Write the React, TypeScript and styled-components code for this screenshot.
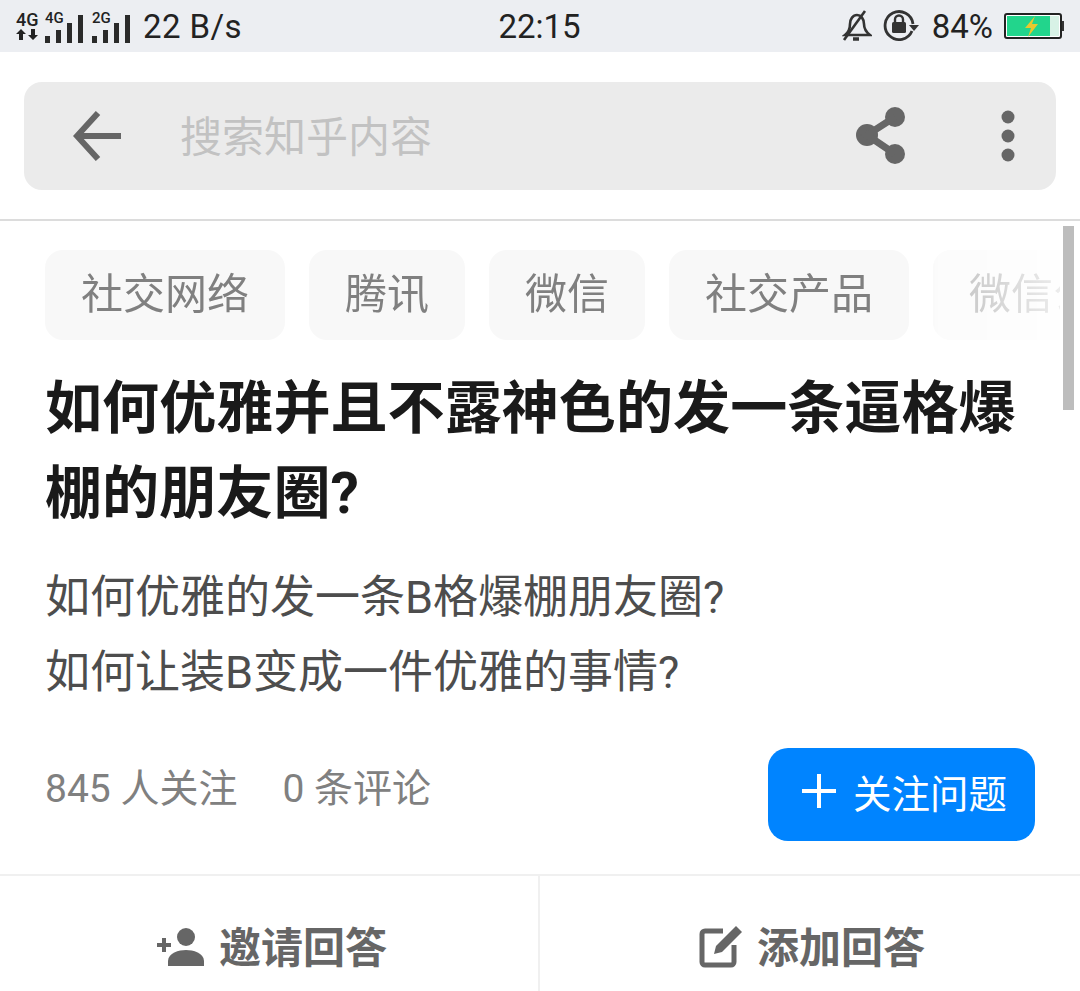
import React from "react";
import styled, { createGlobalStyle } from "styled-components";

const Global = createGlobalStyle`
    html, body {
        margin: 0;
        padding: 0;
        background: #fff;
    }
    * {
        box-sizing: border-box;
    }
`

const FONT = `Roboto, "Noto Sans CJK SC", sans-serif`

const Screen = styled.div`
    position: relative;
    width: 1080px;
    height: 991px;
    overflow: hidden;
    background: #fff;
    font-family: ${FONT};
`

const StatusBar = styled.div`
    display: grid;
    grid-template-columns: 1fr auto 1fr;
    align-items: center;
    height: 52px;
    padding: 0 16px;
    background: #eceef2;
    color: #222;
    font-size: 33px;
`

const StatusLeft = styled.div`
    display: flex;
    align-items: center;
`

const StatusRight = styled.div`
    display: flex;
    align-items: center;
    justify-content: flex-end;
    gap: 11px;
`

const Clock = styled.div`
    margin-right: 1px;
`

const Speed = styled.span`
    margin-left: 13px;
    letter-spacing: 0.4px;
`

const Network = styled.div`
    display: flex;
    flex-direction: column;
    gap: 2px;
    width: 26px;
`

const NetLabel = styled.span<{ $size: number }>`
    font-size: ${(p) => p.$size}px;
    font-weight: 500;
    line-height: 15px;
`

const SignalGroup = styled.div`
    position: relative;
    width: ${(p: { $width: number }) => p.$width}px;
    height: 28px;
`

const SignalLabel = styled.span`
    position: absolute;
    top: 0;
    left: 0;
    font-size: 15px;
    font-weight: 500;
    line-height: 13px;
`

const Header = styled.header`
    height: 169px;
    padding: 30px 24px 0;
    border-bottom: 2px solid #dcdcdc;
`

const SearchBox = styled.div`
    display: flex;
    align-items: center;
    height: 108px;
    padding: 0 41px 0 49px;
    border-radius: 18px;
    background: #ebebeb;
`

const Placeholder = styled.div`
    flex: 1;
    margin: 0 0 6px 59px;
    color: #c2c2c2;
    font-size: 42px;
`

const Content = styled.main`
    padding: 29px 45px 0;
`

const TagRow = styled.div`
    display: flex;
    gap: 24px;
    width: 1015px;
    overflow: hidden;
    -webkit-mask-image: linear-gradient(to right, #000 885px, rgba(0, 0, 0, 0.5) 892px, rgba(0, 0, 0, 0.15) 1015px);
    mask-image: linear-gradient(to right, #000 885px, rgba(0, 0, 0, 0.5) 892px, rgba(0, 0, 0, 0.15) 1015px);
`

const Tag = styled.div`
    flex: none;
    height: 90px;
    padding: 0 36px;
    border-radius: 18px;
    background: #f8f8f8;
    color: #808080;
    font-size: 42px;
    line-height: 90px;
`

const Title = styled.h1`
    margin: 26px 0 0;
    color: #1a1a1a;
    font-size: 57.1px;
    font-weight: 700;
    line-height: 85px;
`

const Description = styled.div`
    margin-top: 24px;
    color: #4d4d4d;
    font-size: 45px;
    line-height: 75px;
`

const StatsRow = styled.div`
    display: flex;
    align-items: center;
    justify-content: space-between;
    margin-top: 38px;
`

const Stats = styled.div`
    display: flex;
    gap: 45px;
    margin-bottom: 20px;
    color: #808080;
    font-size: 39px;
`

const FollowButton = styled.div`
    display: flex;
    align-items: center;
    gap: 17px;
    width: 267px;
    height: 93px;
    padding: 0 0 8px 34px;
    border-radius: 20px;
    background: #0084ff;
    color: #fff;
    font-size: 38.5px;
`

const Footer = styled.footer`
    position: absolute;
    left: 0;
    right: 0;
    bottom: 0;
    display: grid;
    grid-template-columns: 538px 1fr;
    height: 117px;
    border-top: 2px solid #f0f0f0;
`

const FooterAction = styled.div<{ $divided?: boolean }>`
    display: flex;
    align-items: center;
    justify-content: center;
    gap: 14px;
    padding: 21px 0 0 ${(p) => (p.$divided ? 4 : 6)}px;
    border-left: ${(p) => (p.$divided ? "2px solid #f0f0f0" : "none")};
    color: #666;
    font-size: 42px;
    font-weight: 700;
`

const Scrollbar = styled.div`
    position: absolute;
    top: 226px;
    left: 1063px;
    width: 11px;
    height: 184px;
    background: #bdbdbd;
`

const SignalBars = () => (
    <svg width="38" height="28" viewBox="0 0 38 28" fill="#2a2a2a">
        <rect x="0" y="21" width="5" height="7" />
        <rect x="11" y="15" width="5" height="13" />
        <rect x="22" y="8" width="5" height="20" />
        <rect x="33" y="0" width="5" height="28" />
    </svg>
)

const TransferArrows = () => (
    <svg width="22" height="11" viewBox="0 0 22 11" fill="#222">
        <path d="M5 0 0 5h3v6h4V5h3z" />
        <path d="M17 11l5-5h-3V0h-4v6h-3z" />
    </svg>
)

const BellOff = () => (
    <svg width="30" height="32" viewBox="0 0 30 32" fill="none" stroke="#333" strokeWidth="2.6">
        <path d="M3 25c4-3 5-6 5-11 0-5 3-9 7-9s7 4 7 9c0 5 2 8 6 11z" />
        <path d="M2 30 23 1" />
        <path d="M11 29h6" strokeWidth="3.5" />
    </svg>
)

const RotateLock = () => (
    <svg width="38" height="32" viewBox="0 0 38 32">
        <path d="M29 21a14 14 0 1 1 1-7" fill="none" stroke="#333" strokeWidth="2.8" />
        <path d="M26 15h10l-5 6z" fill="#333" />
        <rect x="9" y="12" width="14" height="11" rx="1.5" fill="#333" />
        <path d="M12 12V9.5a4 4 0 0 1 8 0V12" fill="none" stroke="#333" strokeWidth="2.4" />
    </svg>
)

const Battery = () => (
    <svg width="60" height="26" viewBox="0 0 60 26">
        <rect x="1" y="1" width="56" height="24" rx="2" fill="#fff" stroke="#222" strokeWidth="2" />
        <rect x="3" y="3" width="43" height="20" fill="#22d58c" />
        <rect x="46" y="3" width="9" height="20" fill="#d8f2e6" />
        <rect x="58" y="8" width="2" height="10" fill="#333" />
        <path d="M31 3 21 15h6l-3 9 10-13h-6z" fill="#e8c82e" />
    </svg>
)

const BackArrow = () => (
    <svg width="48" height="50" viewBox="0 0 48 50" fill="none" stroke="#666" strokeWidth="6">
        <path d="M25 2 4 25l21 23" />
        <path d="M4 25h44" />
    </svg>
)

const ShareIcon = () => (
    <svg width="52" height="60" viewBox="0 0 52 60" fill="#666">
        <circle cx="40" cy="11" r="10" />
        <circle cx="12" cy="29" r="11" />
        <circle cx="40" cy="48" r="10" />
        <path d="M40 11 12 29l28 19" fill="none" stroke="#666" strokeWidth="7" />
    </svg>
)

const MoreIcon = () => (
    <svg width="14" height="52" viewBox="0 0 14 52" fill="#666" style={{ marginLeft: 94 }}>
        <circle cx="7" cy="7" r="6.5" />
        <circle cx="7" cy="26" r="6.5" />
        <circle cx="7" cy="45" r="6.5" />
    </svg>
)

const PlusIcon = () => (
    <svg width="34" height="34" viewBox="0 0 34 34" stroke="#fff" strokeWidth="4">
        <path d="M0 17h34M17 0v34" />
    </svg>
)

const InviteIcon = () => (
    <svg width="48" height="38" viewBox="0 0 48 38" fill="#666" style={{ marginTop: 5 }}>
        <circle cx="29" cy="9" r="9" />
        <path d="M11 38v-5c0-8 11-11 18-11s18 3 18 11v5z" />
        <path d="M0 15h14v4H0z" />
        <path d="M5 10h4v14H5z" />
    </svg>
)

const EditIcon = () => (
    <svg width="44" height="44" viewBox="0 0 44 44" fill="none" stroke="#666" strokeWidth="5" style={{ marginTop: 4 }}>
        <path d="M24 7H6a3 3 0 0 0-3 3v28a3 3 0 0 0 3 3h26a3 3 0 0 0 3-3V21" />
        <path d="M15 30l2-8L37 2l6 6-20 20z" fill="#666" stroke="none" />
    </svg>
)

export default function App() {
    const tags = ["社交网络", "腾讯", "微信", "社交产品", "微信公众号"]

    return (
        <Screen>
            <Global />
            <StatusBar>
                <StatusLeft>
                    <Network>
                        <NetLabel $size={18}>4G</NetLabel>
                        <TransferArrows />
                    </Network>
                    <SignalGroup $width={38} style={{ marginLeft: 3 }}>
                        <SignalBars />
                        <SignalLabel>4G</SignalLabel>
                    </SignalGroup>
                    <SignalGroup $width={38} style={{ marginLeft: 9 }}>
                        <SignalBars />
                        <SignalLabel>2G</SignalLabel>
                    </SignalGroup>
                    <Speed>22 B/s</Speed>
                </StatusLeft>
                <Clock>22:15</Clock>
                <StatusRight>
                    <BellOff />
                    <RotateLock />
                    <span>84%</span>
                    <Battery />
                </StatusRight>
            </StatusBar>

            <Header>
                <SearchBox>
                    <BackArrow />
                    <Placeholder>搜索知乎内容</Placeholder>
                    <ShareIcon />
                    <MoreIcon />
                </SearchBox>
            </Header>

            <Content>
                <TagRow>
                    {tags.map((tag) => (
                        <Tag key={tag}>{tag}</Tag>
                    ))}
                </TagRow>
                <Title>如何优雅并且不露神色的发一条逼格爆棚的朋友圈?</Title>
                <Description>
                    如何优雅的发一条B格爆棚朋友圈?
                    <br />
                    如何让装B变成一件优雅的事情?
                </Description>
                <StatsRow>
                    <Stats>
                        <span>845 人关注</span>
                        <span>0 条评论</span>
                    </Stats>
                    <FollowButton>
                        <PlusIcon />
                        关注问题
                    </FollowButton>
                </StatsRow>
            </Content>

            <Footer>
                <FooterAction>
                    <InviteIcon />
                    邀请回答
                </FooterAction>
                <FooterAction $divided>
                    <EditIcon />
                    添加回答
                </FooterAction>
            </Footer>

            <Scrollbar />
        </Screen>
    )
}
